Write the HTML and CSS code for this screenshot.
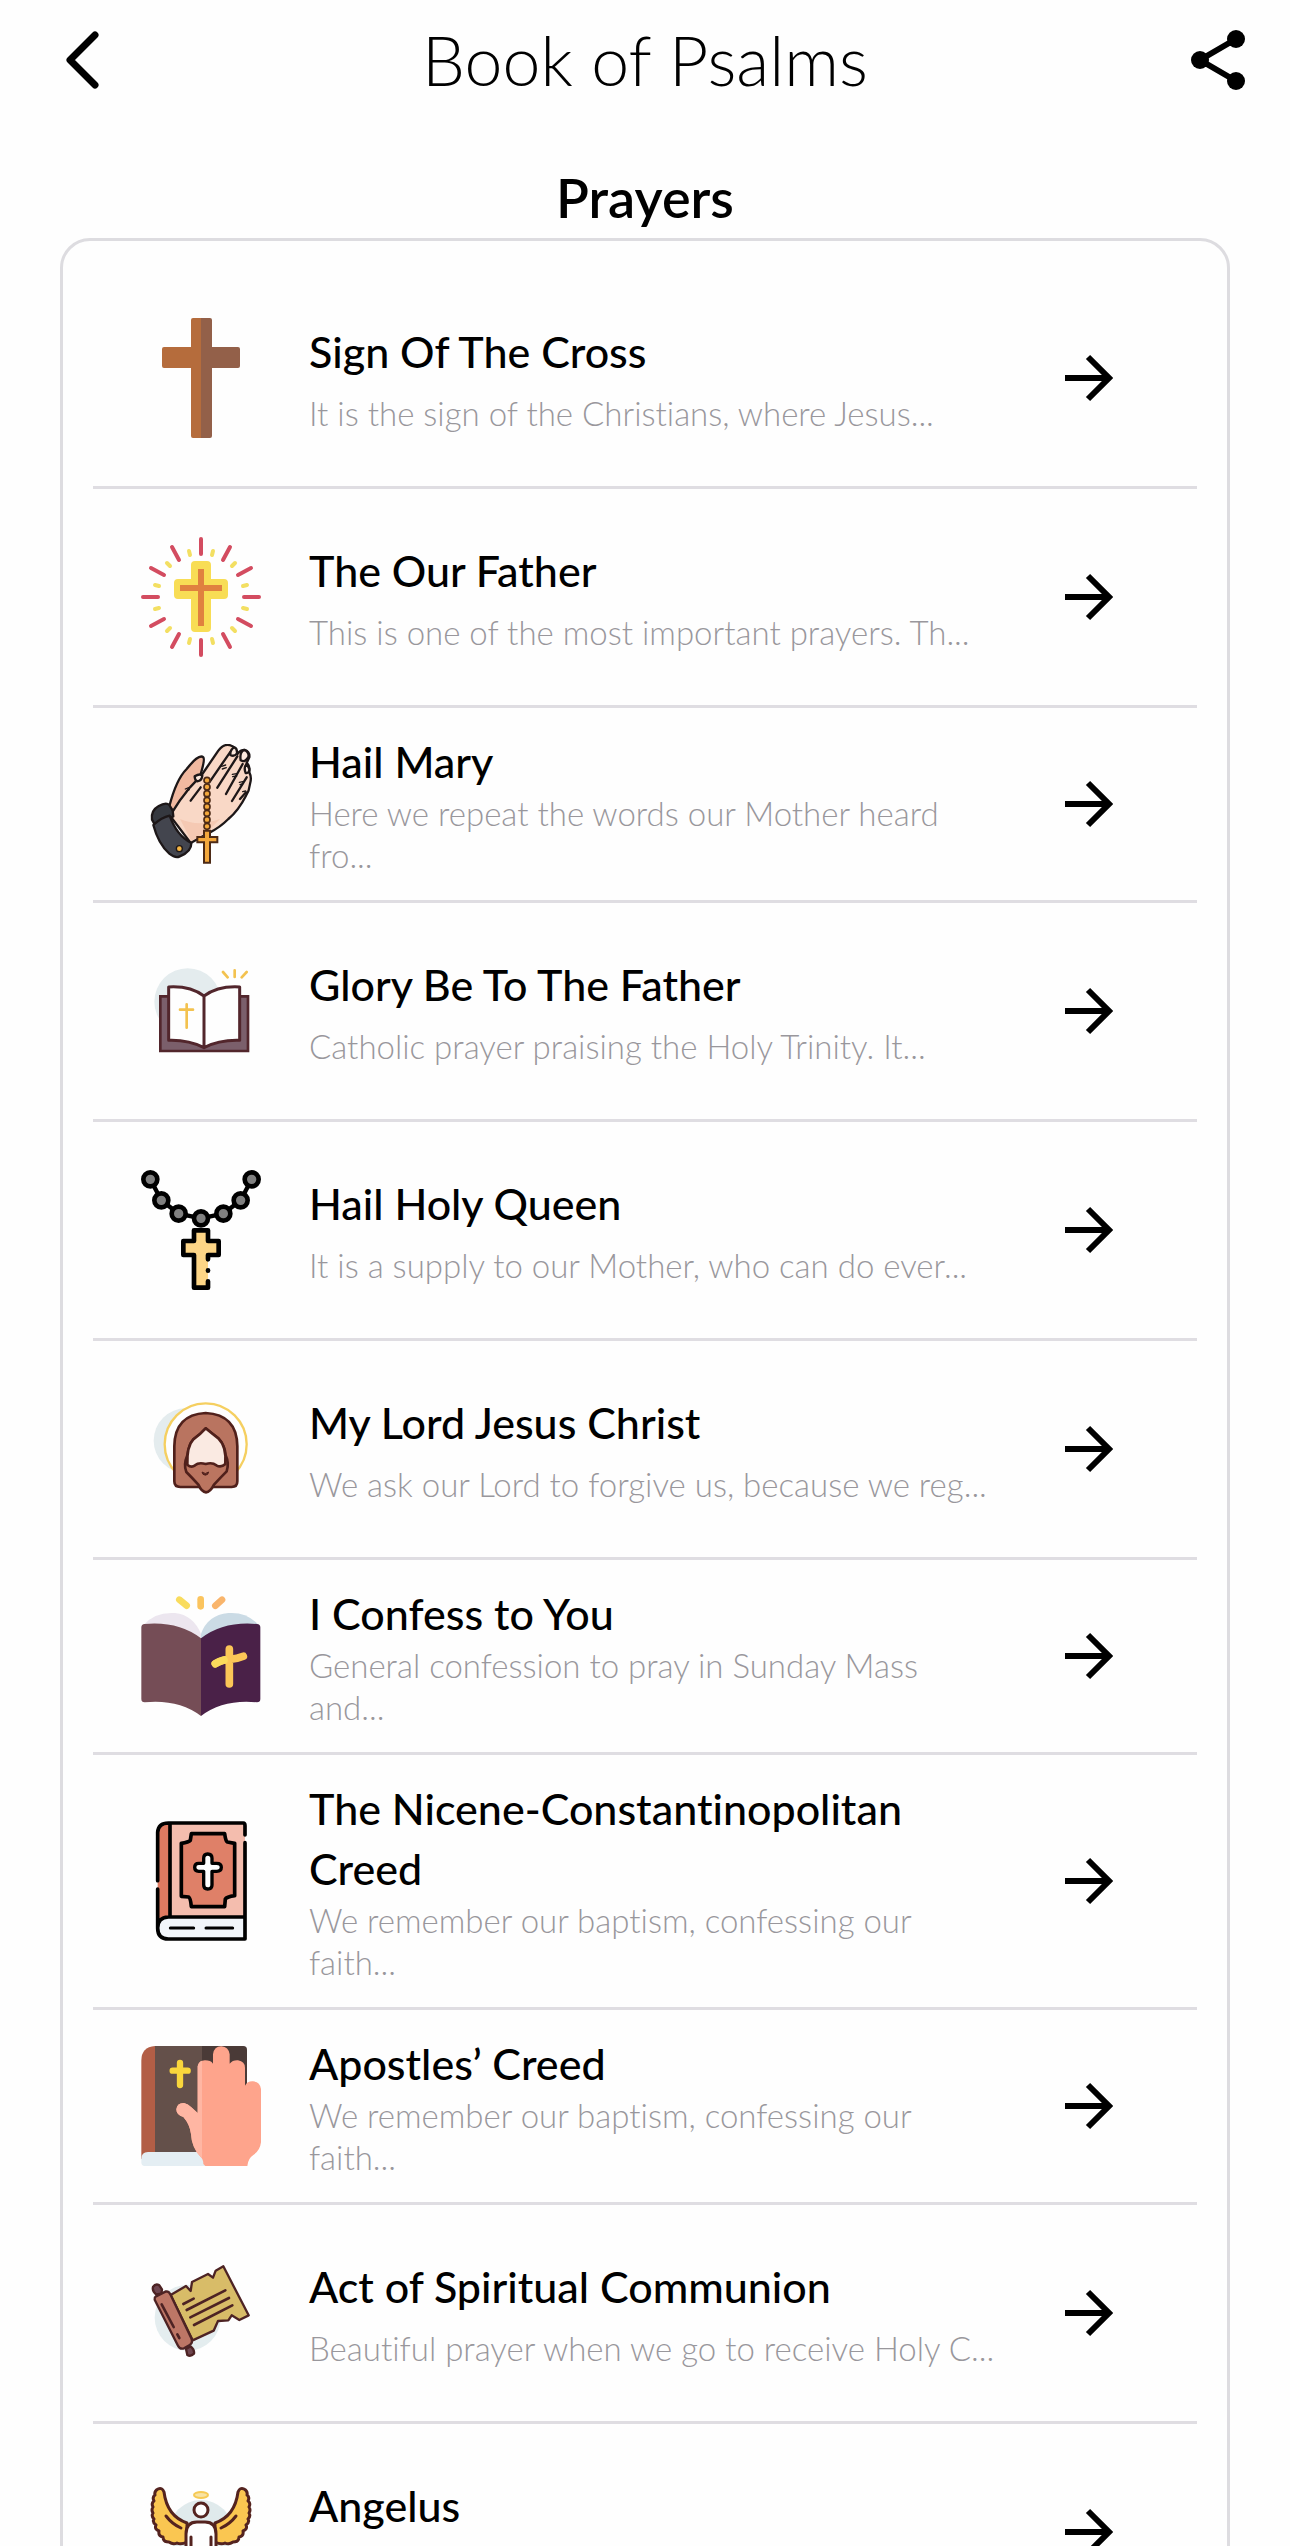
FILE: index.html
```html
<!DOCTYPE html>
<html lang="en">
<head>
    <meta charset="UTF-8">
    <meta name="viewport" content="width=device-width, initial-scale=1.0">
    <title>Book of Psalms</title>
    <link rel="stylesheet" href="styles.css">
</head>
<body>
    <!-- shared arrow for every row -->
    <svg class="sprite" aria-hidden="true">
        <symbol id="arrow" viewBox="0 0 48 48">
            <path d="M0 24H44M23 3L44 24L23 45" fill="none" stroke="#000" stroke-width="6"/>
        </symbol>
    </svg>

    <header class="top-bar">
        <button class="icon-button" type="button" aria-label="Back">
            <svg width="36" height="60" viewBox="0 0 36 60" fill="none" stroke="#000" stroke-width="7" stroke-linecap="round" stroke-linejoin="round">
                <path d="M32 5L7 30L32 55"/>
            </svg>
        </button>
        <h1>Book of Psalms</h1>
        <button class="icon-button" type="button" aria-label="Share">
            <svg width="54" height="60" viewBox="0 0 54 60">
                <path d="M45 9L9 30L45 51" fill="none" stroke="#000" stroke-width="6"/>
                <circle cx="9" cy="30" r="9"/>
                <circle cx="45" cy="9" r="9"/>
                <circle cx="45" cy="51" r="9"/>
            </svg>
        </button>
    </header>

    <main>
        <h2>Prayers</h2>
        <ul class="prayer-list">
            <li>
                <a class="prayer" href="#sign-of-the-cross">
                    <svg class="prayer-icon" viewBox="0 0 120 120">
                        <path fill="#b56c3c" d="M52 0H60V120H52Q50 120 50 118V50H23Q21 50 21 48V31Q21 29 23 29H50V2Q50 0 52 0Z"/>
                        <path fill="#936049" d="M60 0H69Q71 0 71 2V29H97Q99 29 99 31V48Q99 50 97 50H71V118Q71 120 69 120H60Z"/>
                    </svg>
                    <div class="prayer-text short">
                        <h3>Sign Of The Cross</h3>
                        <p>It is the sign of the Christians, where Jesus...</p>
                    </div>
                    <svg class="arrow"><use href="#arrow"/></svg>
                </a>
            </li>
            <li>
                <a class="prayer" href="#our-father">
                    <svg class="prayer-icon" viewBox="0 0 120 120">
                        <g stroke="#d34c60" stroke-width="4" stroke-linecap="round">
                            <path d="M60 2V17M60 103V118M2 60H17M103 60H118"/>
                            <path d="M31 10L38 23M89 10L82 23M31 110L38 97M89 110L82 97"/>
                            <path d="M10 31L23 38M110 31L97 38M10 89L23 82M110 89L97 82"/>
                        </g>
                        <g stroke="#f3df62" stroke-width="4" stroke-linecap="round">
                            <path d="M48 14L49 18M72 14L71 18M48 106L49 102M72 106L71 102"/>
                            <path d="M26 26L29 29M94 26L91 29M26 94L29 91M94 94L91 91"/>
                            <path d="M14 48L18 49M106 48L102 49M14 72L18 71M106 72L102 71"/>
                        </g>
                        <path fill="#f8dd55" d="M54 24H66Q70 24 70 28V42H83Q87 42 87 46V58Q87 62 83 62H70V91Q70 95 66 95H54Q50 95 50 91V62H37Q33 62 33 58V46Q33 42 37 42H50V28Q50 24 54 24Z"/>
                        <path fill="#e0813f" d="M57 32H63V48H81V54H63V89H57V54H39V48H57Z"/>
                    </svg>
                    <div class="prayer-text short">
                        <h3>The Our Father</h3>
                        <p>This is one of the most important prayers. Th...</p>
                    </div>
                    <svg class="arrow"><use href="#arrow"/></svg>
                </a>
            </li>
            <li>
                <a class="prayer" href="#hail-mary">
                    <svg class="prayer-icon" viewBox="63 75 360 360">
                        <g stroke="#1d1718" stroke-width="7" stroke-linejoin="round" stroke-linecap="round">
                            <path fill="#f1b9a0" d="M148 262C160 215 175 175 200 150C220 125 240 105 250 115C255 120 248 145 243 162L240 200L165 285Z"/>
                            <path fill="#f9d8c6" d="M150 290C165 265 185 235 210 205L245 168L295 95Q310 75 328 78Q340 82 345 88L352 105Q362 92 375 93Q390 98 388 115L380 132Q390 140 388 160Q396 175 390 195Q388 215 378 230Q355 275 325 300Q300 325 270 340L212 372Z"/>
                            <path fill="none" d="M330 100L268 190M352 112L292 206M368 135L318 225M380 175L336 246M378 220L360 240M212 245L242 205"/>
                            <path fill="#fce9de" d="M343 85Q330 92 331 108Q343 114 351 103Q352 88 343 85ZM372 93Q358 100 362 124Q377 132 386 112Q386 96 372 93ZM380 134Q370 146 377 162Q388 164 388 150ZM224 172Q240 162 247 170Q245 186 232 187Q224 184 224 172Z"/>
                            <path fill="none" stroke-width="4" d="M305 142L317 138M307 150L319 146M337 166L350 164M338 173L350 171M358 190L368 188M360 197L368 195M196 210L206 206M200 216L208 212M368 218L377 216"/>
                            <path fill="#35383f" d="M96 302Q92 275 115 262Q138 248 148 258L158 275L160 292L105 318Z"/>
                            <path fill="#43454e" d="M100 318Q125 295 149 290Q170 350 214 372Q215 398 178 413Q165 418 148 404Q115 375 100 318Z"/>
                        </g>
                        <path fill="#f1b9a0" opacity=".5" d="M180 300Q235 325 300 300L268 332L214 366Z"/>
                        <circle cx="178" cy="389" r="9" fill="#f5b544" stroke="#1d1718" stroke-width="4"/>
                        <g fill="#f3a83c" stroke="#4c2a16" stroke-width="5">
                            <circle cx="261" cy="184" r="9"/><circle cx="261" cy="204" r="9"/>
                            <circle cx="261" cy="224" r="9"/><circle cx="261" cy="244" r="9"/>
                            <circle cx="261" cy="263" r="9"/><circle cx="261" cy="283" r="9"/>
                            <circle cx="261" cy="302" r="9"/><circle cx="261" cy="322" r="9"/>
                            <path stroke-width="6" d="M252 335H270V354H292V370H270V431H252V370H232V354H252Z"/>
                        </g>
                    </svg>
                    <div class="prayer-text">
                        <h3>Hail Mary</h3>
                        <p>Here we repeat the words our Mother heard<br>fro...</p>
                    </div>
                    <svg class="arrow"><use href="#arrow"/></svg>
                </a>
            </li>
            <li>
                <a class="prayer" href="#glory-be">
                    <svg class="prayer-icon" viewBox="63 68 360 360">
                        <circle cx="203" cy="220" r="100" fill="#e4ecee"/>
                        <path fill="#7b5f6b" stroke="#52262c" stroke-width="8" d="M121 204H384V368H121Z"/>
                        <path fill="#fefefe" stroke="#52262c" stroke-width="9" stroke-linejoin="round" d="M252 203Q210 172 146 176V336Q205 334 252 358Q298 334 359 336V176Q295 172 252 203V358"/>
                        <g fill="none" stroke="#f3c24f" stroke-width="8" stroke-linecap="round">
                            <path d="M200 228V298M180 244H219M344 126V146M309 131L323 147M380 131L365 147"/>
                        </g>
                    </svg>
                    <div class="prayer-text short">
                        <h3>Glory Be To The Father</h3>
                        <p>Catholic prayer praising the Holy Trinity. It...</p>
                    </div>
                    <svg class="arrow"><use href="#arrow"/></svg>
                </a>
            </li>
            <li>
                <a class="prayer" href="#hail-holy-queen">
                    <svg class="prayer-icon" viewBox="63 63 360 360">
                        <path d="M91 91L124 154L176 194L243 208L310 194L362 154L395 91" fill="none" stroke="#000" stroke-width="13"/>
                        <g fill="#808080" stroke="#000" stroke-width="14">
                            <circle cx="91" cy="91" r="21"/><circle cx="124" cy="154" r="21"/>
                            <circle cx="176" cy="194" r="21"/><circle cx="243" cy="208" r="21"/>
                            <circle cx="310" cy="194" r="21"/><circle cx="362" cy="154" r="21"/>
                            <circle cx="395" cy="91" r="21"/>
                        </g>
                        <path fill="#fdd586" d="M222 244H264V276H296V318H264V416H222V318H190V276H222Z"/>
                        <path fill="none" stroke="#000" stroke-width="14" stroke-linecap="round" stroke-linejoin="round" d="M264 331V318H296V276H264V244H222V276H190V318H222V416H264V397M264 364V365"/>
                    </svg>
                    <div class="prayer-text short">
                        <h3>Hail Holy Queen</h3>
                        <p>It is a supply to our Mother, who can do ever...</p>
                    </div>
                    <svg class="arrow"><use href="#arrow"/></svg>
                </a>
            </li>
            <li>
                <a class="prayer" href="#my-lord-jesus-christ">
                    <svg class="prayer-icon" viewBox="63 63 360 360">
                        <circle cx="198" cy="218" r="97" fill="#e4ecee"/>
                        <circle cx="257" cy="229" r="123" fill="#fefefe" stroke="#f5cf60" stroke-width="7"/>
                        <path fill="#fefefe" d="M120 318H163V400H120ZM355 318H395V400H355Z"/>
                        <g stroke="#50201b" stroke-width="8" stroke-linejoin="round">
                            <path fill="#b97460" d="M257 135Q351 140 352 235V340Q352 357 335 357H181Q163 357 163 340V235Q164 140 257 135Z"/>
                            <path fill="#bb7560" d="M257 181Q240 200 220 214Q206 230 202 262Q190 290 199 312Q215 328 235 350Q245 372 258 373Q271 372 282 350Q302 328 320 310Q328 285 317 262Q314 230 296 212Q275 196 257 181Z"/>
                            <path fill="#faeae2" d="M257 181Q240 200 220 214Q200 235 202 290Q214 300 225 292Q236 282 257 288Q277 282 289 292Q303 300 316 288Q320 235 296 212Q275 196 257 181Z"/>
                        </g>
                        <path d="M246 312Q256 321 266 312L263 319Q256 324 249 319Z" fill="#50201b" stroke="#50201b" stroke-width="3"/>
                    </svg>
                    <div class="prayer-text short">
                        <h3>My Lord Jesus Christ</h3>
                        <p>We ask our Lord to forgive us, because we reg...</p>
                    </div>
                    <svg class="arrow"><use href="#arrow"/></svg>
                </a>
            </li>
            <li>
                <a class="prayer" href="#i-confess">
                    <svg class="prayer-icon" viewBox="63 51 360 360">
                        <g stroke-width="20" stroke-linecap="round">
                            <path stroke="#f9dc5e" d="M178 62L200 80"/>
                            <path stroke="#fbc45e" d="M242 61V82"/>
                            <path stroke="#f9b56c" d="M306 62L286 80"/>
                        </g>
                        <path fill="#ece6ef" d="M72 137Q105 98 165 102Q220 108 243 165V200H72Z"/>
                        <path fill="#cbdbe5" d="M415 137Q380 98 325 102Q262 108 243 165V200H415Z"/>
                        <path fill="#754d56" d="M74 135Q175 126 243 178V411Q175 360 74 370Q64 370 64 360V145Q64 136 74 135Z"/>
                        <path fill="#4a2148" d="M411 135Q310 126 243 178V411Q310 360 411 370Q421 370 421 360V145Q421 136 411 135Z"/>
                        <path fill="none" stroke="#fbc657" stroke-width="23" stroke-linecap="round" d="M328 210V315M286 254Q305 242 330 241Q352 240 370 232"/>
                        <path fill="none" stroke="#fada5c" stroke-width="23" stroke-linecap="round" d="M286 254Q298 246 312 243"/>
                    </svg>
                    <div class="prayer-text">
                        <h3>I Confess to You</h3>
                        <p>General confession to pray in Sunday Mass<br>and...</p>
                    </div>
                    <svg class="arrow"><use href="#arrow"/></svg>
                </a>
            </li>
            <li>
                <a class="prayer" href="#nicene-creed">
                    <svg class="prayer-icon" viewBox="63 66 360 360">
                        <path fill="#df7a61" d="M150 72H135Q113 76 113 100V380L150 354Z"/>
                        <path fill="#f4bdae" d="M150 72H375V354H150Z"/>
                        <path fill="#f1f5fa" d="M375 354H145Q113 356 113 387Q113 420 145 420H375Z"/>
                        <g fill="none" stroke="#000" stroke-width="11" stroke-linecap="round" stroke-linejoin="round">
                            <path d="M113 245V100Q115 72 145 72H370Q375 72 375 80V108M113 270V387Q113 420 145 420H375V131M150 74V352M375 354H145Q113 356 113 387"/>
                            <path stroke-width="9" d="M151 387H221M258 387H338"/>
                            <path fill="#df8068" d="M214 104H314Q317 126 322 129L344 133V290Q320 294 316 300L314 323H214Q212 298 206 294L184 292V133Q206 129 211 124Z"/>
                            <path fill="#fefefe" stroke-width="10" d="M251 178Q251 165 263 165Q276 165 276 178V193H290Q304 193 304 205Q304 217 290 217H276V258Q276 270 263 270Q251 270 251 258V217H236Q224 217 224 205Q224 193 236 193H251Z"/>
                        </g>
                    </svg>
                    <div class="prayer-text">
                        <h3>The Nicene-Constantinopolitan Creed</h3>
                        <p>We remember our baptism, confessing our<br>faith...</p>
                    </div>
                    <svg class="arrow"><use href="#arrow"/></svg>
                </a>
            </li>
            <li>
                <a class="prayer" href="#apostles-creed">
                    <svg class="prayer-icon" viewBox="63 51 360 360">
                        <path fill="#b25e46" d="M105 51Q64 54 64 95V390H105Z"/>
                        <path fill="#64504a" d="M105 51H246V372H105Z"/>
                        <path fill="#4a3a37" d="M246 51H370Q381 51 381 62V372H246Z"/>
                        <path fill="#e4eef3" d="M84 369H260V411H74Q64 411 64 400V389Q64 370 84 369Z"/>
                        <path fill="none" stroke="#f9d63c" stroke-width="19" stroke-linecap="round" d="M180 102V168M158 125H203"/>
                        <path fill="#fea48c" d="M250 405Q250 390 240 382Q215 355 213 315Q209 285 190 264Q169 258 169 241Q172 221 192 222Q204 224 214 235L233 252V112Q236 94 255 94Q272 94 279 104V76Q282 52 304 52Q326 54 329 76V104Q338 93 354 94Q375 98 375 116V170Q382 156 399 157Q420 158 423 180V340Q420 365 400 378Q384 388 382 411H256Z"/>
                        <path fill="#ffb6a3" d="M233 252V112Q236 98 246 95V388Q215 358 213 315Q209 285 190 264Q169 258 169 241Q172 221 192 222Q204 224 214 235Z"/>
                    </svg>
                    <div class="prayer-text">
                        <h3>Apostles’ Creed</h3>
                        <p>We remember our baptism, confessing our<br>faith...</p>
                    </div>
                    <svg class="arrow"><use href="#arrow"/></svg>
                </a>
            </li>
            <li>
                <a class="prayer" href="#spiritual-communion">
                    <svg class="prayer-icon" viewBox="63 48 360 360">
                        <circle cx="203" cy="242" r="99" fill="#e4edef"/>
                        <g stroke="#4d2324" stroke-width="7" stroke-linejoin="round">
                            <path fill="#6f4650" d="M99 150Q106 139 117 144L126 157L124 170L108 172Q96 162 99 150ZM198 336L212 328Q224 338 222 350Q212 360 202 354Z"/>
                            <path fill="#d8bc68" d="M152 174L198 147L212 162L216 135L264 111L279 122L287 101L310 88L386 235L358 249L335 235L325 250L294 252L281 281L218 310Z"/>
                            <path fill="#bd7666" d="M108 178L138 163Q147 162 152 174L214 304Q220 318 208 325L192 334Q180 338 174 326L104 188Q103 181 108 178Z"/>
                        </g>
                        <path fill="none" stroke="#4d2324" stroke-width="8" stroke-linecap="round" d="M190 201L221 185M200 219L316 160M211 241L327 183M222 264L337 205M125 202L161 270M172 292L178 303"/>
                    </svg>
                    <div class="prayer-text short">
                        <h3>Act of Spiritual Communion</h3>
                        <p>Beautiful prayer when we go to receive Holy C...</p>
                    </div>
                    <svg class="arrow"><use href="#arrow"/></svg>
                </a>
            </li>
            <li>
                <a class="prayer" href="#angelus">
                    <svg class="prayer-icon" viewBox="0 0 120 120">
                        <circle cx="60" cy="60" r="32" fill="#e0eaec"/>
                        <ellipse cx="60" cy="23" rx="7" ry="3" fill="#f8e3a4" stroke="#f6ca55" stroke-width="2"/>
                        <g stroke="#54231f" stroke-width="3" stroke-linejoin="round" stroke-linecap="round">
                            <path fill="#fac651" d="M46 51Q26 44 23 20Q21 15 17 17Q13 19 14 23Q11 25 13 29Q10 31 12 35Q10 38 12 41Q10 44 13 47Q11 50 15 53Q13 57 18 59Q17 64 22 65Q22 70 28 70Q32 73 36 71Q40 73 46 70Z"/>
                            <path fill="#fac651" d="M74 51Q94 44 97 20Q99 15 103 17Q107 19 106 23Q109 25 107 29Q110 31 108 35Q110 38 108 41Q110 44 107 47Q109 50 105 53Q107 57 102 59Q103 64 98 65Q98 70 92 70Q88 73 84 71Q80 73 74 70Z"/>
                            <path fill="none" d="M25 44Q31 52 40 56M95 44Q89 52 80 56"/>
                            <path fill="#fefefe" d="M45 110V62Q45 50 56 50H64Q75 50 75 62V110Z"/>
                            <path fill="none" d="M50 65V84M70 65V84"/>
                            <circle cx="60" cy="38" r="7" fill="#fefefe"/>
                        </g>
                    </svg>
                    <div class="prayer-text short">
                        <h3>Angelus</h3>
                        <p></p>
                    </div>
                    <svg class="arrow"><use href="#arrow"/></svg>
                </a>
            </li>
        </ul>
    </main>
</body>
</html>
```
FILE: styles.css
```css
* {
    margin: 0;
    padding: 0;
    box-sizing: border-box;
}

body {
    font-family: Lato, 'Open Sans', sans-serif;
    font-variant-ligatures: none;
    background: #fefefe;
    color: #000;
}

.sprite {
    display: none;
}

.top-bar {
    display: flex;
    align-items: center;
    justify-content: space-between;
    height: 120px;
    padding: 0 45px;
}

.icon-button {
    display: flex;
    justify-content: flex-end;
    width: 54px;
    background: none;
    border: none;
    cursor: pointer;
}

h1 {
    font-size: 68px;
    font-weight: 300;
    line-height: 80px;
}

h2 {
    padding: 42px 0 4px;
    font-size: 54px;
    font-weight: 600;
    line-height: 72px;
    text-align: center;
}

.prayer-list {
    margin: 0 60px;
    padding: 29px 30px;
    border: 3px solid #dddce0;
    border-radius: 30px;
    list-style: none;
}

.prayer-list li {
    border-bottom: 3px solid #dfdde2;
}

.prayer-list li:last-child {
    border-bottom: none;
}

.prayer {
    display: flex;
    align-items: center;
    padding: 24px 84px 24px 48px;
    color: inherit;
    text-decoration: none;
}

.prayer-icon {
    flex: none;
    width: 120px;
    height: 120px;
}

.prayer-text {
    flex: 1;
    margin: 0 56px 0 48px;
}

/* one-line entries are taller and looser */
.prayer-text.short {
    display: flex;
    flex-direction: column;
    justify-content: center;
    gap: 10px;
    min-height: 168px;
}

h3 {
    font-size: 43px;
    font-weight: 500;
    line-height: 60px;
}

.prayer-text p {
    min-height: 42px;
    color: #99979c;
    font-size: 33px;
    font-weight: 300;
    line-height: 42px;
}

.arrow {
    flex: none;
    width: 48px;
    height: 48px;
}
```
